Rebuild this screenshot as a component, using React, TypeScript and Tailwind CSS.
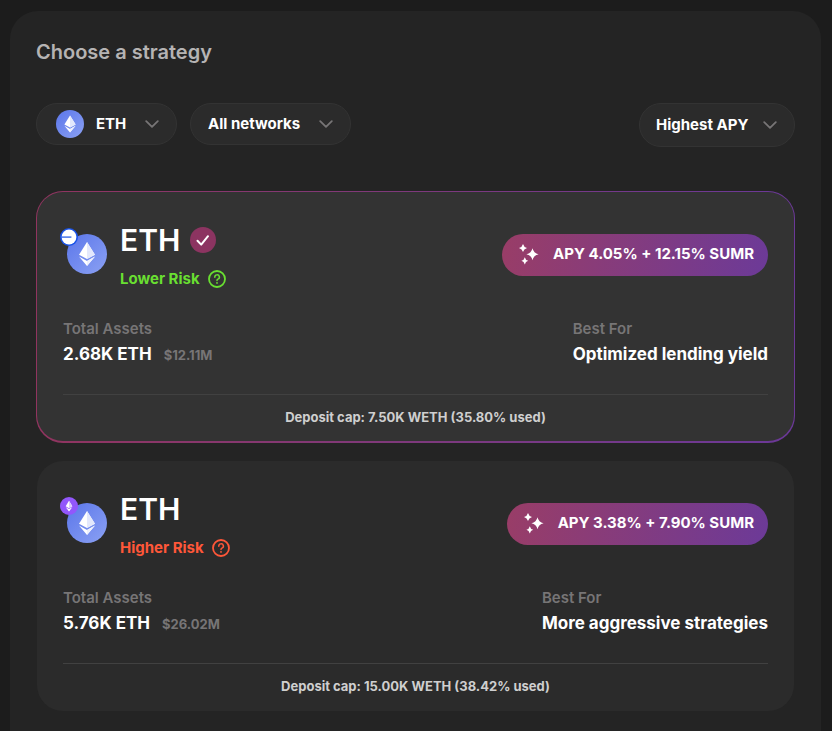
import React from "react";

type Risk = "lower" | "higher";

interface Strategy {
  id: string;
  token: string;
  network: "base" | "mainnet";
  selected: boolean;
  risk: Risk;
  apy: string;
  assets: string;
  usd: string;
  bestFor: string;
  cap: string;
}

const strategies: Strategy[] = [
  {
    id: "base-eth",
    token: "ETH",
    network: "base",
    selected: true,
    risk: "lower",
    apy: "APY 4.05% + 12.15% SUMR",
    assets: "2.68K ETH",
    usd: "$12.11M",
    bestFor: "Optimized lending yield",
    cap: "Deposit cap: 7.50K WETH (35.80% used)",
  },
  {
    id: "mainnet-eth",
    token: "ETH",
    network: "mainnet",
    selected: false,
    risk: "higher",
    apy: "APY 3.38% + 7.90% SUMR",
    assets: "5.76K ETH",
    usd: "$26.02M",
    bestFor: "More aggressive strategies",
    cap: "Deposit cap: 15.00K WETH (38.42% used)",
  },
];

function EthIcon({ className }: { className: string }) {
  return (
    <svg viewBox="0 0 40 40" className={className} aria-hidden="true">
      <defs>
        <linearGradient id="eth-disc" x1="0" y1="0" x2="1" y2="1">
          <stop offset="0" stopColor="#5b76ea" />
          <stop offset="1" stopColor="#8ba1f3" />
        </linearGradient>
      </defs>
      <circle cx="20" cy="20" r="20" fill="url(#eth-disc)" />
      <path d="M20 8 L12 20.8 L20 25 L28 20.8 Z" fill="#fff" />
      <path d="M20 8 V25 L28 20.8 Z" fill="#e3e8fc" />
      <path d="M12 22.4 L20 32 L28 22.4 L20 27 Z" fill="#fff" />
      <path d="M20 27 V32 L28 22.4 Z" fill="#eef1fd" />
    </svg>
  );
}

function NetworkBadge({ network }: { network: Strategy["network"] }) {
  return (
    <svg viewBox="0 0 18 18" className="absolute -top-[6px] -left-[7px] size-[18px]" aria-hidden="true">
      {network === "base" ? (
        <>
          <circle cx="9" cy="9" r="9" fill="#1a53e8" />
          <circle cx="9" cy="9" r="7.4" fill="#fff" />
          <path d="M1 8.4 H11.4 V9.8 H1 Z" fill="#3a6be8" />
        </>
      ) : (
        <>
          <circle cx="9" cy="9" r="9" fill="#9257fb" />
          <path d="M9 3.8 L5.7 9.3 L9 11.2 L12.3 9.3 Z" fill="#fff" />
          <path d="M5.7 10.2 L9 14.4 L12.3 10.2 L9 12.1 Z" fill="#fff" />
          <path d="M9 3.8 V11.2 L12.3 9.3 Z" fill="#dccbfe" />
        </>
      )}
    </svg>
  );
}

function Chevron() {
  return (
    <svg
      viewBox="0 0 14 8"
      className="pointer-events-none absolute right-[17px] h-2 w-[14px]"
      fill="none"
      stroke="#777576"
      strokeWidth="1.8"
      strokeLinecap="round"
      strokeLinejoin="round"
      aria-hidden="true"
    >
      <path d="M1.2 1.2 L7 6.8 L12.8 1.2" />
    </svg>
  );
}

function Sparkles() {
  return (
    <svg viewBox="0 0 22 22" className="size-[22px]" fill="#fff" aria-hidden="true">
      <path d="M14.5 5.2 Q15.6 10.1 20.6 11.2 Q15.6 12.3 14.5 17.2 Q13.4 12.3 8.4 11.2 Q13.4 10.1 14.5 5.2 Z" />
      <path d="M5 1 Q5.8 4.2 9 5 Q5.8 5.8 5 9 Q4.2 5.8 1 5 Q4.2 4.2 5 1 Z" />
      <path d="M6.8 14.2 Q7.5 17.1 10.2 17.8 Q7.5 18.5 6.8 21.4 Q6.1 18.5 3.4 17.8 Q6.1 17.1 6.8 14.2 Z" />
    </svg>
  );
}

function Filter({
  label,
  options,
  className,
  selectClassName,
  icon,
}: {
  label: string;
  options: string[];
  className: string;
  selectClassName: string;
  icon?: React.ReactNode;
}) {
  return (
    <div
      className={`relative flex items-center rounded-full border border-[#333333] bg-[#2b2b2b] ${className}`}
    >
      {icon}
      <select
        aria-label={label}
        className={`h-full w-full cursor-pointer appearance-none rounded-full bg-transparent text-[15px] font-bold text-white outline-none ${selectClassName}`}
      >
        {options.map((option) => (
          <option key={option} className="bg-[#2b2b2b]">
            {option}
          </option>
        ))}
      </select>
      <Chevron />
    </div>
  );
}

function RiskLabel({ risk }: { risk: Risk }) {
  const lower = risk === "lower";
  return (
    <div
      className={`mt-[9px] flex items-center gap-2 text-[15px] leading-6 font-bold ${
        lower ? "text-[#69df31]" : "text-[#ff5739]"
      }`}
    >
      <span>{lower ? "Lower Risk" : "Higher Risk"}</span>
      <button type="button" aria-label="About this risk level" className="cursor-pointer">
        <svg
          viewBox="0 0 18 18"
          className="size-[18px]"
          fill="none"
          stroke="currentColor"
          strokeWidth="1.5"
          strokeLinecap="round"
          aria-hidden="true"
        >
          <circle cx="9" cy="9" r="8" strokeWidth="1.8" />
          <path d="M6.8 7.2 A2.3 2.2 0 1 1 9.9 9.1 Q9 9.5 9 10.6" />
          <circle cx="9" cy="12.9" r="0.9" fill="currentColor" stroke="none" />
        </svg>
      </button>
    </div>
  );
}

function StrategyCard({ strategy }: { strategy: Strategy }) {
  const { selected } = strategy;
  return (
    <div
      className={
        selected
          ? "rounded-[27px] bg-linear-to-r from-[#91345f] to-[#6b3898] px-px pt-px pb-[2px]"
          : "px-px"
      }
    >
      <article
        className={`rounded-[26px] px-[26px] pt-[30px] ${
          selected ? "bg-[#333333] pb-3" : "bg-[#2b2b2b] pb-[13px]"
        }`}
      >
        <div className="flex items-start justify-between">
          <div className="flex">
            <div className="relative mt-3 ml-1 size-10">
              <EthIcon className="size-10" />
              <NetworkBadge network={strategy.network} />
            </div>
            <div className="ml-[13px]">
              <div className="flex h-9 items-center gap-[10px]">
                <h2 className="text-[30px] leading-9 font-semibold text-white">{strategy.token}</h2>
                {selected && (
                  <svg viewBox="0 0 26 26" className="size-[26px]" role="img" aria-label="Selected">
                    <circle cx="13" cy="13" r="13" fill="#8c3461" />
                    <path
                      d="M7.5 13.8 L11.2 17.6 L18 9.2"
                      fill="none"
                      stroke="#fff"
                      strokeWidth="2"
                      strokeLinecap="round"
                      strokeLinejoin="round"
                    />
                  </svg>
                )}
              </div>
              <RiskLabel risk={strategy.risk} />
            </div>
          </div>
          <div className="mt-3 flex items-center gap-[13px] rounded-full bg-linear-[100deg] from-[#993d67] to-[#6c3a98] pt-2 pr-[14px] pb-[10px] pl-4">
            <Sparkles />
            <span className="text-[15px] leading-6 font-bold text-white">{strategy.apy}</span>
          </div>
        </div>

        <dl className="mt-[26px] flex justify-between">
          <div>
            <dt className="text-[15px] leading-6 font-semibold text-[#777576]">Total Assets</dt>
            <dd className="flex items-baseline gap-3 text-[17px] leading-[26px] font-bold text-white">
              {strategy.assets}
              <span className="text-[13px] font-bold text-[#777576]">{strategy.usd}</span>
            </dd>
          </div>
          <div>
            <dt className="text-[15px] leading-6 font-semibold text-[#777576]">Best For</dt>
            <dd className="text-[17px] leading-[26px] font-bold text-white">{strategy.bestFor}</dd>
          </div>
        </dl>

        <p className="mt-[26px] border-t border-[#414141] pt-[10px] text-center text-[13px] leading-6 font-bold text-[#cfcfcf]">
          {strategy.cap}
        </p>
      </article>
    </div>
  );
}

export default function App() {
  return (
    <div className="min-h-screen bg-[#1c1c1c] pt-[11px] pr-[11px] pl-[10px] font-['Inter',sans-serif]">
      <main className="rounded-t-[28px] bg-[#242424] px-[26px] pt-[26px] pb-5">
        <h1 className="text-xl leading-[30px] font-semibold text-[#b5b3b3]">Choose a strategy</h1>

        <div className="mt-9 flex items-start justify-between">
          <div className="flex gap-[13px]">
            <Filter
              label="Token"
              options={["ETH", "USDC", "EURC"]}
              className="h-[42px] w-[141px]"
              selectClassName="pl-[59px]"
              icon={<EthIcon className="pointer-events-none absolute left-[19px] size-7" />}
            />
            <Filter
              label="Network"
              options={["All networks", "Base", "Mainnet"]}
              className="h-[42px] w-[161px]"
              selectClassName="pl-[17px]"
            />
          </div>
          <Filter
            label="Sort by"
            options={["Highest APY", "Lowest APY"]}
            className="h-11 w-[156px]"
            selectClassName="pl-4"
          />
        </div>

        <div className="mt-11 flex flex-col gap-[18px]">
          {strategies.map((strategy) => (
            <StrategyCard key={strategy.id} strategy={strategy} />
          ))}
        </div>
      </main>
    </div>
  );
}
